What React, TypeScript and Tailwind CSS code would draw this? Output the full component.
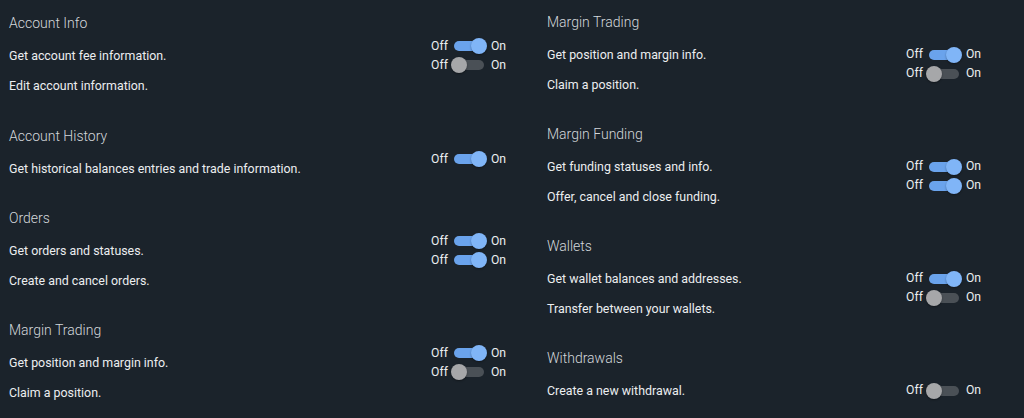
import React from "react";

type Item = { text: string; on: boolean };
type Section = { title: string; items: Item[] };

const left: Section[] = [
  {
    title: "Account Info",
    items: [
      { text: "Get account fee information.", on: true },
      { text: "Edit account information.", on: false },
    ],
  },
  {
    title: "Account History",
    items: [{ text: "Get historical balances entries and trade information.", on: true }],
  },
  {
    title: "Orders",
    items: [
      { text: "Get orders and statuses.", on: true },
      { text: "Create and cancel orders.", on: true },
    ],
  },
  {
    title: "Margin Trading",
    items: [
      { text: "Get position and margin info.", on: true },
      { text: "Claim a position.", on: false },
    ],
  },
];

const right: Section[] = [
  {
    title: "Margin Trading",
    items: [
      { text: "Get position and margin info.", on: true },
      { text: "Claim a position.", on: false },
    ],
  },
  {
    title: "Margin Funding",
    items: [
      { text: "Get funding statuses and info.", on: true },
      { text: "Offer, cancel and close funding.", on: true },
    ],
  },
  {
    title: "Wallets",
    items: [
      { text: "Get wallet balances and addresses.", on: true },
      { text: "Transfer between your wallets.", on: false },
    ],
  },
  {
    title: "Withdrawals",
    items: [{ text: "Create a new withdrawal.", on: false }],
  },
];

function Toggle({ on }: { on: boolean }) {
  return (
    <div className="flex h-[19px] items-center text-[12.2px] leading-none text-[#eceef0]">
      <span>Off</span>
      <span className="relative mx-[3.5px] block h-4 w-9">
        <span
          className={
            on
              ? "absolute left-[3px] right-[3px] top-[3px] h-[10px] rounded-full bg-[#6aa3ec]"
              : "absolute left-[3px] right-[3px] top-[3px] h-[10px] rounded-full bg-[#4a5056]"
          }
        />
        <span
          className={
            on
              ? "absolute right-0 top-0 h-4 w-4 rounded-full bg-[#80b5f7] shadow-[0_1px_2px_rgba(0,0,0,0.35)]"
              : "absolute left-0 top-0 h-4 w-4 rounded-full bg-[#a6a7a9] shadow-[0_1px_2px_rgba(0,0,0,0.35)]"
          }
        />
      </span>
      <span>On</span>
    </div>
  );
}

function SectionBlock({ s, leftCol, first }: { s: Section; leftCol: boolean; first?: boolean }) {
  return (
    <div className={first ? "mb-[25px]" : "mb-6"}>
      <h3 className="h-5 text-[14px] font-light leading-5 text-[#d3d7db]">{s.title}</h3>
      <div className="mt-2 flex justify-between">
        <div className="flex flex-col">
          {s.items.map((it) => (
            <div key={it.text} className="h-[30px] text-[12.4px] leading-[30px] text-[#eceef0]">
              {it.text}
            </div>
          ))}
        </div>
        <div className={leftCol ? "-mt-[4px] flex flex-col" : "mt-[5.5px] flex flex-col"}>
          {s.items.map((it) => (
            <Toggle key={it.text} on={it.on} />
          ))}
        </div>
      </div>
    </div>
  );
}

export default function App() {
  return (
    <div
      className="flex h-[418px] w-full overflow-hidden bg-[#1b232b] pl-[9px]"
      style={{ fontFamily: "Roboto, 'Noto Sans', sans-serif" }}
    >
      <div className="w-[497px] pt-[12.5px]">
        {left.map((s, i) => (
          <SectionBlock key={"l" + s.title} s={s} leftCol first={i === 0} />
        ))}
      </div>
      <div className="ml-[41px] w-[434px] pt-[11.5px]">
        {right.map((s) => (
          <SectionBlock key={"r" + s.title} s={s} leftCol={false} />
        ))}
      </div>
    </div>
  );
}
